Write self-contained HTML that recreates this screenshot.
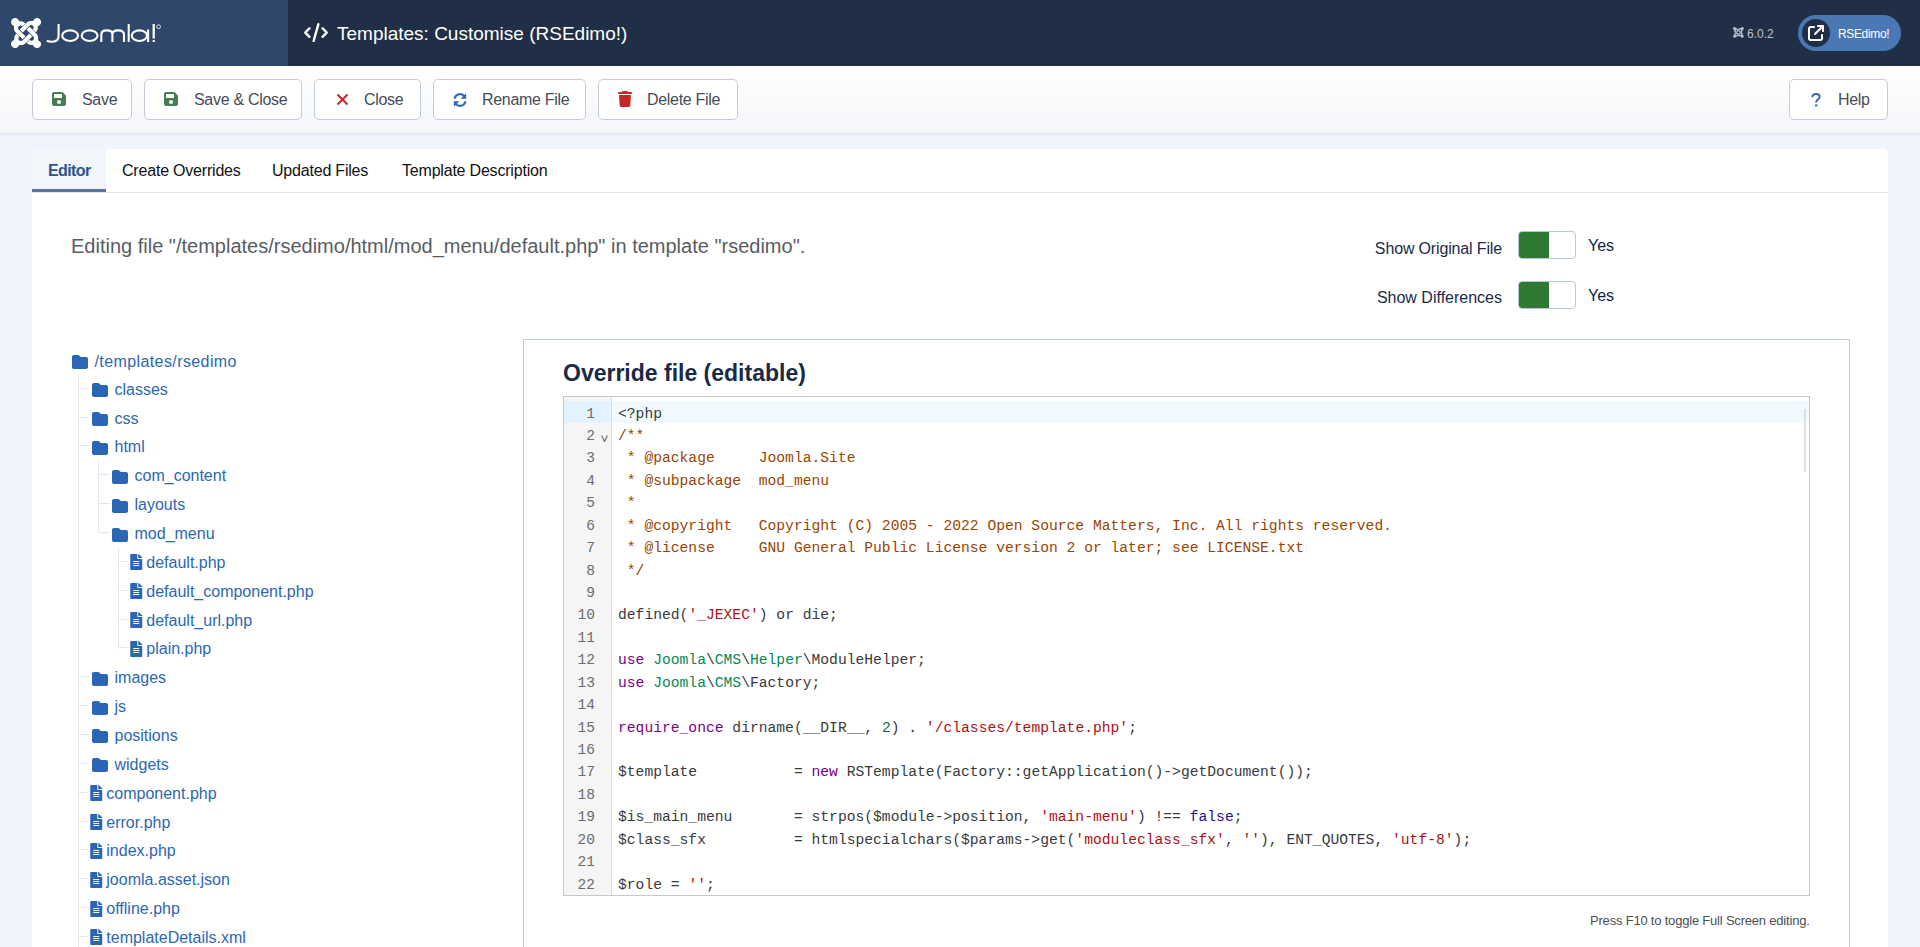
<!DOCTYPE html>
<html><head><meta charset="utf-8"><style>
*{box-sizing:border-box;margin:0;padding:0}
html,body{width:1920px;height:947px;overflow:hidden}
body{font-family:"Liberation Sans",sans-serif;background:#f0f4fb;position:relative;color:#22262a}
.abs{position:absolute}
svg{position:absolute;display:block}
#hdr{left:0;top:0;width:1920px;height:66px;background:#212f46}
#logo{left:0;top:0;width:288px;height:66px;background:#2e476b}
#title{left:337px;top:22px;font-size:19px;color:#fff;white-space:nowrap;line-height:24px}
#ver{left:1747px;top:25.5px;font-size:12px;color:#b9c2cf;line-height:16px;white-space:nowrap}
#pill{left:1798px;top:15px;width:103px;height:36px;border-radius:18px;background:#4a78b5}
#pillc{left:1802px;top:19px;width:28px;height:28px;border-radius:14px;background:#212f46}
#pillt{left:1838px;top:25.5px;font-size:12px;color:#fff;line-height:16px;white-space:nowrap;letter-spacing:-.35px}
#tb{left:0;top:66px;width:1920px;height:67px;background:linear-gradient(#fff,#f4f6f9);box-shadow:0 1px 3px rgba(30,50,90,.10)}
.btn{position:absolute;top:79px;height:41px;border:1px solid #c3ccd8;border-radius:5px;background:#fff;color:#474d55;font-size:16px;letter-spacing:-.3px;white-space:nowrap}
.btn span{position:absolute;top:11px;line-height:18px}
#card{left:32px;top:149px;width:1856px;height:820px;background:#fff;border-radius:5px 5px 0 0}
.tab{position:absolute;top:149px;height:43px;font-size:16px;line-height:18px;color:#111;white-space:nowrap;letter-spacing:-.2px}
.tab span{position:absolute;top:13px}
.tab.act{background:#f3f6fa;color:#2a5590;font-weight:bold;border-bottom:3px solid #5675a0;letter-spacing:-.6px}
#tabline{left:32px;top:192px;width:1856px;height:1px;background:#dde3ec}
#editing{left:71px;top:234px;font-size:20px;line-height:24px;color:#585d64;white-space:nowrap}
.swl{position:absolute;font-size:16px;line-height:18px;color:#1a2b4c;white-space:nowrap;text-align:right;letter-spacing:-.15px}
.sw{position:absolute;left:1518px;width:58px;height:28px;border:1px solid #b7c6da;border-radius:4px;background:#fff;overflow:hidden}
.sw i{position:absolute;left:0;top:0;width:30px;height:26px;background:#2e7a33}
.yes{position:absolute;left:1588px;font-size:16px;line-height:18px;color:#0d1f45}
.tr{position:absolute;font-size:16px;line-height:18px;color:#2c67b2;white-space:nowrap}
.vl{position:absolute;width:1px;background:#dfe6f0}
.hl{position:absolute;height:1px;background:#dfe6f0}
#panel{left:523px;top:339px;width:1327px;height:700px;border:1px solid #bccbe0;background:#fff}
#ph{left:563px;top:358px;font-size:23px;font-weight:bold;color:#1b2a44;line-height:30px;white-space:nowrap}
#cm{left:563px;top:396px;width:1247px;height:500px;border:1px solid #c8c8c8;background:#fff;overflow:hidden}
#gut{left:0;top:0;width:48px;height:498px;background:#f5f5f5;border-right:1px solid #ddd}
.ln{position:absolute;left:0;width:31px;text-align:right;font-family:"Liberation Mono",monospace;font-size:14.5px;color:#6c6c6c;line-height:22.4px}
.code{position:absolute;left:54px;font-family:"Liberation Mono",monospace;font-size:14.67px;color:#383a3c;line-height:22.4px;white-space:pre}
.c{color:#994400}.s{color:#aa1111}.k{color:#770088}.n{color:#008855}.nu{color:#116644}.a{color:#221199}
#actl{left:0;top:4px;width:1245px;height:22px;background:#f1faff}
#actg{left:0;top:4px;width:47px;height:22px;background:#e2f2ff}
#f10{left:1590px;top:913px;font-size:13px;letter-spacing:-.2px;color:#4a4f55;white-space:nowrap;line-height:16px}
</style></head><body>
<div id="hdr" class="abs"></div>
<div id="logo" class="abs"></div>
<svg style="left:10.8px;top:17.8px" width="30.1" height="30.1" viewBox="0 32 448 448"><g fill="#fff"><path d="M.6 92.1C.6 58.8 27.4 32 60.4 32c30 0 54.5 21.9 59.2 50.2 32.6-7.6 67.1.6 96.5 30l-44.3 44.3c-20.5-20.5-42.6-16.3-55.4-3.5-14.3 14.3-14.3 37.9 0 52.2l99.5 99.5-44 44.3c-87.7-87.2-49.7-49.7-99.8-99.7-26.8-26.5-35-64.8-24.8-98.9C20.4 144.6.6 120.7.6 92.1z"/><path transform="rotate(90 224 256)" d="M.6 92.1C.6 58.8 27.4 32 60.4 32c30 0 54.5 21.9 59.2 50.2 32.6-7.6 67.1.6 96.5 30l-44.3 44.3c-20.5-20.5-42.6-16.3-55.4-3.5-14.3 14.3-14.3 37.9 0 52.2l99.5 99.5-44 44.3c-87.7-87.2-49.7-49.7-99.8-99.7-26.8-26.5-35-64.8-24.8-98.9C20.4 144.6.6 120.7.6 92.1z"/><path transform="rotate(180 224 256)" d="M.6 92.1C.6 58.8 27.4 32 60.4 32c30 0 54.5 21.9 59.2 50.2 32.6-7.6 67.1.6 96.5 30l-44.3 44.3c-20.5-20.5-42.6-16.3-55.4-3.5-14.3 14.3-14.3 37.9 0 52.2l99.5 99.5-44 44.3c-87.7-87.2-49.7-49.7-99.8-99.7-26.8-26.5-35-64.8-24.8-98.9C20.4 144.6.6 120.7.6 92.1z"/><path transform="rotate(270 224 256)" d="M.6 92.1C.6 58.8 27.4 32 60.4 32c30 0 54.5 21.9 59.2 50.2 32.6-7.6 67.1.6 96.5 30l-44.3 44.3c-20.5-20.5-42.6-16.3-55.4-3.5-14.3 14.3-14.3 37.9 0 52.2l99.5 99.5-44 44.3c-87.7-87.2-49.7-49.7-99.8-99.7-26.8-26.5-35-64.8-24.8-98.9C20.4 144.6.6 120.7.6 92.1z"/></g></svg>
<svg style="left:40px;top:16px" width="125" height="32" viewBox="0 0 125 32"><g fill="none" stroke="#fff" stroke-width="2.1">
<path d="M18.6 8.1V19.5Q18.6 25.6 12.5 25.8Q9 25.9 6.8 24.6"/>
<ellipse cx="30.1" cy="19.7" rx="7.9" ry="5.3"/>
<ellipse cx="49.6" cy="19.7" rx="7.9" ry="5.3"/>
<path d="M61.3 26V18.5Q61.3 14.4 66.8 14.4Q72.4 14.4 72.4 18.5V26M72.4 18.5Q72.4 14.4 78 14.4Q84 14.4 84 18.5V26"/>
<path d="M88.7 8.1V26"/>
<ellipse cx="99.4" cy="19.7" rx="7.6" ry="5.3"/>
<path d="M108.1 13.5V26"/>
<path d="M113.7 8.1V22.5" stroke-width="2.3"/>
<circle cx="118.6" cy="10.7" r="1.9" stroke-width=".8"/>
</g><rect x="112.6" y="24" width="2.3" height="2" fill="#fff"/></svg>
<svg style="left:304px;top:23px" width="24" height="19.2" viewBox="0 0 640 512" fill="#fff"><path d="M392.8 1.2c-17-4.9-34.7 5-39.6 22l-128 448c-4.9 17 5 34.7 22 39.6s34.7-5 39.6-22l128-448c4.9-17-5-34.7-22-39.6zm80.6 120.1c-12.5 12.5-12.5 32.8 0 45.3L562.7 256l-89.4 89.4c-12.5 12.5-12.5 32.8 0 45.3s32.8 12.5 45.3 0l112-112c12.5-12.5 12.5-32.8 0-45.3l-112-112c-12.5-12.5-32.8-12.5-45.3 0zm-306.7 0c-12.5-12.5-32.8-12.5-45.3 0l-112 112c-12.5 12.5-12.5 32.8 0 45.3l112 112c12.5 12.5 32.8 12.5 45.3 0s12.5-32.8 0-45.3L77.3 256l89.4-89.4c12.5-12.5 12.5-32.8 0-45.3z"/></svg>
<div id="title" class="abs">Templates: Customise (RSEdimo!)</div>
<div id="ver" class="abs">6.0.2</div>
<svg style="left:1733.4px;top:27.3px" width="10.8" height="10.8" viewBox="0 32 448 448"><g fill="#b9c2cf"><path d="M.6 92.1C.6 58.8 27.4 32 60.4 32c30 0 54.5 21.9 59.2 50.2 32.6-7.6 67.1.6 96.5 30l-44.3 44.3c-20.5-20.5-42.6-16.3-55.4-3.5-14.3 14.3-14.3 37.9 0 52.2l99.5 99.5-44 44.3c-87.7-87.2-49.7-49.7-99.8-99.7-26.8-26.5-35-64.8-24.8-98.9C20.4 144.6.6 120.7.6 92.1z"/><path transform="rotate(90 224 256)" d="M.6 92.1C.6 58.8 27.4 32 60.4 32c30 0 54.5 21.9 59.2 50.2 32.6-7.6 67.1.6 96.5 30l-44.3 44.3c-20.5-20.5-42.6-16.3-55.4-3.5-14.3 14.3-14.3 37.9 0 52.2l99.5 99.5-44 44.3c-87.7-87.2-49.7-49.7-99.8-99.7-26.8-26.5-35-64.8-24.8-98.9C20.4 144.6.6 120.7.6 92.1z"/><path transform="rotate(180 224 256)" d="M.6 92.1C.6 58.8 27.4 32 60.4 32c30 0 54.5 21.9 59.2 50.2 32.6-7.6 67.1.6 96.5 30l-44.3 44.3c-20.5-20.5-42.6-16.3-55.4-3.5-14.3 14.3-14.3 37.9 0 52.2l99.5 99.5-44 44.3c-87.7-87.2-49.7-49.7-99.8-99.7-26.8-26.5-35-64.8-24.8-98.9C20.4 144.6.6 120.7.6 92.1z"/><path transform="rotate(270 224 256)" d="M.6 92.1C.6 58.8 27.4 32 60.4 32c30 0 54.5 21.9 59.2 50.2 32.6-7.6 67.1.6 96.5 30l-44.3 44.3c-20.5-20.5-42.6-16.3-55.4-3.5-14.3 14.3-14.3 37.9 0 52.2l99.5 99.5-44 44.3c-87.7-87.2-49.7-49.7-99.8-99.7-26.8-26.5-35-64.8-24.8-98.9C20.4 144.6.6 120.7.6 92.1z"/></g></svg>
<div id="pill" class="abs"></div><div id="pillc" class="abs"></div>
<svg style="left:1808px;top:25px" width="16" height="16" viewBox="0 0 512 512" fill="#fff"><path d="M320 0c-17.7 0-32 14.3-32 32s14.3 32 32 32h82.7L201.4 265.4c-12.5 12.5-12.5 32.8 0 45.3s32.8 12.5 45.3 0L448 109.3V192c0 17.7 14.3 32 32 32s32-14.3 32-32V32c0-17.7-14.3-32-32-32H320zM80 32C35.8 32 0 67.8 0 112V432c0 44.2 35.8 80 80 80H400c44.2 0 80-35.8 80-80V320c0-17.7-14.3-32-32-32s-32 14.3-32 32V432c0 8.8-7.2 16-16 16H80c-8.8 0-16-7.2-16-16V112c0-8.8 7.2-16 16-16H192c17.7 0 32-14.3 32-32s-14.3-32-32-32H80z"/></svg>
<div id="pillt" class="abs">RSEdimo!</div>
<div id="tb" class="abs"></div>
<div class="btn" style="left:32px;width:100px"><svg style="left:19px;top:11px" width="14" height="16" viewBox="0 0 448 512" fill="#457d54"><path d="M64 32C28.7 32 0 60.7 0 96V416c0 35.3 28.7 64 64 64H384c35.3 0 64-28.7 64-64V173.3c0-17-6.7-33.3-18.7-45.3L352 50.7C340 38.7 323.7 32 306.7 32H64zm0 96c0-17.7 14.3-32 32-32H288c17.7 0 32 14.3 32 32v64c0 17.7-14.3 32-32 32H96c-17.7 0-32-14.3-32-32V128zM224 288a64 64 0 1 1 0 128 64 64 0 1 1 0-128z"/></svg><span style="left:49px">Save</span></div>
<div class="btn" style="left:144px;width:158px"><svg style="left:19px;top:11px" width="14" height="16" viewBox="0 0 448 512" fill="#457d54"><path d="M64 32C28.7 32 0 60.7 0 96V416c0 35.3 28.7 64 64 64H384c35.3 0 64-28.7 64-64V173.3c0-17-6.7-33.3-18.7-45.3L352 50.7C340 38.7 323.7 32 306.7 32H64zm0 96c0-17.7 14.3-32 32-32H288c17.7 0 32 14.3 32 32v64c0 17.7-14.3 32-32 32H96c-17.7 0-32-14.3-32-32V128zM224 288a64 64 0 1 1 0 128 64 64 0 1 1 0-128z"/></svg><span style="left:49px">Save &amp; Close</span></div>
<div class="btn" style="left:314px;width:107px"><svg style="left:21px;top:13px" width="13" height="13" viewBox="0 0 13 13"><path d="M1.5 1.5L11.5 11.5M11.5 1.5L1.5 11.5" stroke="#c52827" stroke-width="2"/></svg><span style="left:49px">Close</span></div>
<div class="btn" style="left:433px;width:153px"><svg style="left:18px;top:12px" width="16" height="16" viewBox="0 0 16 16"><g fill="none" stroke="#2a69b8" stroke-width="2.2"><path d="M2.6 6.6A5.6 5.6 0 0 1 12.6 4.4"/><path d="M13.4 9.4A5.6 5.6 0 0 1 3.4 11.6"/></g><path d="M14.2 1.2V6.8H8.6Z" fill="#2a69b8"/><path d="M1.8 14.8V9.2H7.4Z" fill="#2a69b8"/></svg><span style="left:48px">Rename File</span></div>
<div class="btn" style="left:598px;width:140px"><svg style="left:19px;top:11px" width="14" height="16" viewBox="0 0 448 512" fill="#c52827"><path d="M135.2 17.7L128 32H32C14.3 32 0 46.3 0 64S14.3 96 32 96H416c17.7 0 32-14.3 32-32s-14.3-32-32-32H320l-7.2-14.3C307.4 6.8 296.3 0 284.2 0H163.8c-12.1 0-23.2 6.8-28.6 17.7zM416 128H32L53.2 467c1.6 25.3 22.6 45 47.9 45H346.9c25.3 0 46.3-19.7 47.9-45L416 128z"/></svg><span style="left:48px">Delete File</span></div>
<div class="btn" style="left:1789px;width:99px"><svg style="left:21px;top:13px" width="10" height="14" viewBox="0 0 10 14"><path d="M1.3 4.2C1.3 2.2 2.9 1 5 1S8.7 2.2 8.7 4C8.7 6.3 5.5 6.3 5.2 8.8V9.4" fill="none" stroke="#2a69b8" stroke-width="1.9"/><circle cx="5.2" cy="12.4" r="1.2" fill="#2a69b8"/></svg><span style="left:48px">Help</span></div>
<div id="card" class="abs"></div>
<div class="tab act abs" style="left:32px;width:74px;border-top-left-radius:5px"><span style="left:16px">Editor</span></div>
<div class="tab abs" style="left:106px;width:150px"><span style="left:16px">Create Overrides</span></div>
<div class="tab abs" style="left:256px;width:130px"><span style="left:16px">Updated Files</span></div>
<div class="tab abs" style="left:386px;width:182px"><span style="left:16px">Template Description</span></div>
<div id="tabline" class="abs"></div>
<div id="editing" class="abs">Editing file "/templates/rsedimo/html/mod_menu/default.php" in template "rsedimo".</div>
<div class="swl" style="left:1300px;width:202px;top:240px">Show Original File</div>
<div class="sw" style="top:231px"><i></i></div>
<div class="yes" style="top:237px">Yes</div>
<div class="swl" style="left:1300px;width:202px;top:289px;letter-spacing:0">Show Differences</div>
<div class="sw" style="top:281px"><i></i></div>
<div class="yes" style="top:287px">Yes</div>
<svg style="left:72px;top:354.3px" width="16" height="16" viewBox="0 0 512 512" fill="#2a66b5"><path d="M64 480H448c35.3 0 64-28.7 64-64V160c0-35.3-28.7-64-64-64H288c-10.1 0-19.6-4.7-25.6-12.8L243.2 57.6C231.1 41.5 212.1 32 192 32H64C28.7 32 0 60.7 0 96V416c0 35.3 28.7 64 64 64z"/></svg>
<div class="tr" style="left:94.5px;top:352.8px;letter-spacing:.4px">/templates/rsedimo</div>
<svg style="left:92px;top:382.2px" width="16" height="16" viewBox="0 0 512 512" fill="#2a66b5"><path d="M64 480H448c35.3 0 64-28.7 64-64V160c0-35.3-28.7-64-64-64H288c-10.1 0-19.6-4.7-25.6-12.8L243.2 57.6C231.1 41.5 212.1 32 192 32H64C28.7 32 0 60.7 0 96V416c0 35.3 28.7 64 64 64z"/></svg>
<div class="tr" style="left:114.5px;top:380.7px">classes</div>
<div class="hl" style="left:78.5px;top:387.7px;width:10.5px"></div>
<svg style="left:92px;top:411.1px" width="16" height="16" viewBox="0 0 512 512" fill="#2a66b5"><path d="M64 480H448c35.3 0 64-28.7 64-64V160c0-35.3-28.7-64-64-64H288c-10.1 0-19.6-4.7-25.6-12.8L243.2 57.6C231.1 41.5 212.1 32 192 32H64C28.7 32 0 60.7 0 96V416c0 35.3 28.7 64 64 64z"/></svg>
<div class="tr" style="left:114.5px;top:409.6px">css</div>
<div class="hl" style="left:78.5px;top:416.6px;width:10.5px"></div>
<svg style="left:92px;top:439.9px" width="16" height="16" viewBox="0 0 512 512" fill="#2a66b5"><path d="M64 480H448c35.3 0 64-28.7 64-64V160c0-35.3-28.7-64-64-64H288c-10.1 0-19.6-4.7-25.6-12.8L243.2 57.6C231.1 41.5 212.1 32 192 32H64C28.7 32 0 60.7 0 96V416c0 35.3 28.7 64 64 64z"/></svg>
<div class="tr" style="left:114.5px;top:438.4px">html</div>
<div class="hl" style="left:78.5px;top:445.4px;width:10.5px"></div>
<svg style="left:112px;top:468.8px" width="16" height="16" viewBox="0 0 512 512" fill="#2a66b5"><path d="M64 480H448c35.3 0 64-28.7 64-64V160c0-35.3-28.7-64-64-64H288c-10.1 0-19.6-4.7-25.6-12.8L243.2 57.6C231.1 41.5 212.1 32 192 32H64C28.7 32 0 60.7 0 96V416c0 35.3 28.7 64 64 64z"/></svg>
<div class="tr" style="left:134.5px;top:467.2px">com_content</div>
<div class="hl" style="left:98.5px;top:474.2px;width:10.5px"></div>
<svg style="left:112px;top:497.6px" width="16" height="16" viewBox="0 0 512 512" fill="#2a66b5"><path d="M64 480H448c35.3 0 64-28.7 64-64V160c0-35.3-28.7-64-64-64H288c-10.1 0-19.6-4.7-25.6-12.8L243.2 57.6C231.1 41.5 212.1 32 192 32H64C28.7 32 0 60.7 0 96V416c0 35.3 28.7 64 64 64z"/></svg>
<div class="tr" style="left:134.5px;top:496.1px">layouts</div>
<div class="hl" style="left:98.5px;top:503.1px;width:10.5px"></div>
<svg style="left:112px;top:526.5px" width="16" height="16" viewBox="0 0 512 512" fill="#2a66b5"><path d="M64 480H448c35.3 0 64-28.7 64-64V160c0-35.3-28.7-64-64-64H288c-10.1 0-19.6-4.7-25.6-12.8L243.2 57.6C231.1 41.5 212.1 32 192 32H64C28.7 32 0 60.7 0 96V416c0 35.3 28.7 64 64 64z"/></svg>
<div class="tr" style="left:134.5px;top:525.0px">mod_menu</div>
<div class="hl" style="left:98.5px;top:532.0px;width:10.5px"></div>
<svg style="left:130px;top:554.3px" width="12.5" height="16" viewBox="0 0 384 512" fill="#2a66b5"><path d="M224 136V0H24C10.7 0 0 10.7 0 24v464c0 13.3 10.7 24 24 24h336c13.3 0 24-10.7 24-24V160H248c-13.2 0-24-10.8-24-24zm64 236c0 6.6-5.4 12-12 12H108c-6.6 0-12-5.4-12-12v-8c0-6.6 5.4-12 12-12h168c6.6 0 12 5.4 12 12v8zm0-64c0 6.6-5.4 12-12 12H108c-6.6 0-12-5.4-12-12v-8c0-6.6 5.4-12 12-12h168c6.6 0 12 5.4 12 12v8zm0-72v8c0 6.6-5.4 12-12 12H108c-6.6 0-12-5.4-12-12v-8c0-6.6 5.4-12 12-12h168c6.6 0 12 5.4 12 12zm96-114.1v6.1H256V0h6.1c6.4 0 12.5 2.5 17 7l97.9 98c4.5 4.5 7 10.6 7 16.9z"/></svg>
<div class="tr" style="left:146.3px;top:553.8px">default.php</div>
<div class="hl" style="left:118.5px;top:560.8px;width:8.5px"></div>
<svg style="left:130px;top:583.1px" width="12.5" height="16" viewBox="0 0 384 512" fill="#2a66b5"><path d="M224 136V0H24C10.7 0 0 10.7 0 24v464c0 13.3 10.7 24 24 24h336c13.3 0 24-10.7 24-24V160H248c-13.2 0-24-10.8-24-24zm64 236c0 6.6-5.4 12-12 12H108c-6.6 0-12-5.4-12-12v-8c0-6.6 5.4-12 12-12h168c6.6 0 12 5.4 12 12v8zm0-64c0 6.6-5.4 12-12 12H108c-6.6 0-12-5.4-12-12v-8c0-6.6 5.4-12 12-12h168c6.6 0 12 5.4 12 12v8zm0-72v8c0 6.6-5.4 12-12 12H108c-6.6 0-12-5.4-12-12v-8c0-6.6 5.4-12 12-12h168c6.6 0 12 5.4 12 12zm96-114.1v6.1H256V0h6.1c6.4 0 12.5 2.5 17 7l97.9 98c4.5 4.5 7 10.6 7 16.9z"/></svg>
<div class="tr" style="left:146.3px;top:582.6px">default_component.php</div>
<div class="hl" style="left:118.5px;top:589.6px;width:8.5px"></div>
<svg style="left:130px;top:612.0px" width="12.5" height="16" viewBox="0 0 384 512" fill="#2a66b5"><path d="M224 136V0H24C10.7 0 0 10.7 0 24v464c0 13.3 10.7 24 24 24h336c13.3 0 24-10.7 24-24V160H248c-13.2 0-24-10.8-24-24zm64 236c0 6.6-5.4 12-12 12H108c-6.6 0-12-5.4-12-12v-8c0-6.6 5.4-12 12-12h168c6.6 0 12 5.4 12 12v8zm0-64c0 6.6-5.4 12-12 12H108c-6.6 0-12-5.4-12-12v-8c0-6.6 5.4-12 12-12h168c6.6 0 12 5.4 12 12v8zm0-72v8c0 6.6-5.4 12-12 12H108c-6.6 0-12-5.4-12-12v-8c0-6.6 5.4-12 12-12h168c6.6 0 12 5.4 12 12zm96-114.1v6.1H256V0h6.1c6.4 0 12.5 2.5 17 7l97.9 98c4.5 4.5 7 10.6 7 16.9z"/></svg>
<div class="tr" style="left:146.3px;top:611.5px">default_url.php</div>
<div class="hl" style="left:118.5px;top:618.5px;width:8.5px"></div>
<svg style="left:130px;top:640.9px" width="12.5" height="16" viewBox="0 0 384 512" fill="#2a66b5"><path d="M224 136V0H24C10.7 0 0 10.7 0 24v464c0 13.3 10.7 24 24 24h336c13.3 0 24-10.7 24-24V160H248c-13.2 0-24-10.8-24-24zm64 236c0 6.6-5.4 12-12 12H108c-6.6 0-12-5.4-12-12v-8c0-6.6 5.4-12 12-12h168c6.6 0 12 5.4 12 12v8zm0-64c0 6.6-5.4 12-12 12H108c-6.6 0-12-5.4-12-12v-8c0-6.6 5.4-12 12-12h168c6.6 0 12 5.4 12 12v8zm0-72v8c0 6.6-5.4 12-12 12H108c-6.6 0-12-5.4-12-12v-8c0-6.6 5.4-12 12-12h168c6.6 0 12 5.4 12 12zm96-114.1v6.1H256V0h6.1c6.4 0 12.5 2.5 17 7l97.9 98c4.5 4.5 7 10.6 7 16.9z"/></svg>
<div class="tr" style="left:146.3px;top:640.4px">plain.php</div>
<div class="hl" style="left:118.5px;top:647.4px;width:8.5px"></div>
<svg style="left:92px;top:670.7px" width="16" height="16" viewBox="0 0 512 512" fill="#2a66b5"><path d="M64 480H448c35.3 0 64-28.7 64-64V160c0-35.3-28.7-64-64-64H288c-10.1 0-19.6-4.7-25.6-12.8L243.2 57.6C231.1 41.5 212.1 32 192 32H64C28.7 32 0 60.7 0 96V416c0 35.3 28.7 64 64 64z"/></svg>
<div class="tr" style="left:114.5px;top:669.2px">images</div>
<div class="hl" style="left:78.5px;top:676.2px;width:10.5px"></div>
<svg style="left:92px;top:699.5px" width="16" height="16" viewBox="0 0 512 512" fill="#2a66b5"><path d="M64 480H448c35.3 0 64-28.7 64-64V160c0-35.3-28.7-64-64-64H288c-10.1 0-19.6-4.7-25.6-12.8L243.2 57.6C231.1 41.5 212.1 32 192 32H64C28.7 32 0 60.7 0 96V416c0 35.3 28.7 64 64 64z"/></svg>
<div class="tr" style="left:114.5px;top:698.0px">js</div>
<div class="hl" style="left:78.5px;top:705.0px;width:10.5px"></div>
<svg style="left:92px;top:728.4px" width="16" height="16" viewBox="0 0 512 512" fill="#2a66b5"><path d="M64 480H448c35.3 0 64-28.7 64-64V160c0-35.3-28.7-64-64-64H288c-10.1 0-19.6-4.7-25.6-12.8L243.2 57.6C231.1 41.5 212.1 32 192 32H64C28.7 32 0 60.7 0 96V416c0 35.3 28.7 64 64 64z"/></svg>
<div class="tr" style="left:114.5px;top:726.9px">positions</div>
<div class="hl" style="left:78.5px;top:733.9px;width:10.5px"></div>
<svg style="left:92px;top:757.2px" width="16" height="16" viewBox="0 0 512 512" fill="#2a66b5"><path d="M64 480H448c35.3 0 64-28.7 64-64V160c0-35.3-28.7-64-64-64H288c-10.1 0-19.6-4.7-25.6-12.8L243.2 57.6C231.1 41.5 212.1 32 192 32H64C28.7 32 0 60.7 0 96V416c0 35.3 28.7 64 64 64z"/></svg>
<div class="tr" style="left:114.5px;top:755.8px">widgets</div>
<div class="hl" style="left:78.5px;top:762.8px;width:10.5px"></div>
<svg style="left:90px;top:785.1px" width="12.5" height="16" viewBox="0 0 384 512" fill="#2a66b5"><path d="M224 136V0H24C10.7 0 0 10.7 0 24v464c0 13.3 10.7 24 24 24h336c13.3 0 24-10.7 24-24V160H248c-13.2 0-24-10.8-24-24zm64 236c0 6.6-5.4 12-12 12H108c-6.6 0-12-5.4-12-12v-8c0-6.6 5.4-12 12-12h168c6.6 0 12 5.4 12 12v8zm0-64c0 6.6-5.4 12-12 12H108c-6.6 0-12-5.4-12-12v-8c0-6.6 5.4-12 12-12h168c6.6 0 12 5.4 12 12v8zm0-72v8c0 6.6-5.4 12-12 12H108c-6.6 0-12-5.4-12-12v-8c0-6.6 5.4-12 12-12h168c6.6 0 12 5.4 12 12zm96-114.1v6.1H256V0h6.1c6.4 0 12.5 2.5 17 7l97.9 98c4.5 4.5 7 10.6 7 16.9z"/></svg>
<div class="tr" style="left:106.3px;top:784.6px">component.php</div>
<div class="hl" style="left:78.5px;top:791.6px;width:8.5px"></div>
<svg style="left:90px;top:814.0px" width="12.5" height="16" viewBox="0 0 384 512" fill="#2a66b5"><path d="M224 136V0H24C10.7 0 0 10.7 0 24v464c0 13.3 10.7 24 24 24h336c13.3 0 24-10.7 24-24V160H248c-13.2 0-24-10.8-24-24zm64 236c0 6.6-5.4 12-12 12H108c-6.6 0-12-5.4-12-12v-8c0-6.6 5.4-12 12-12h168c6.6 0 12 5.4 12 12v8zm0-64c0 6.6-5.4 12-12 12H108c-6.6 0-12-5.4-12-12v-8c0-6.6 5.4-12 12-12h168c6.6 0 12 5.4 12 12v8zm0-72v8c0 6.6-5.4 12-12 12H108c-6.6 0-12-5.4-12-12v-8c0-6.6 5.4-12 12-12h168c6.6 0 12 5.4 12 12zm96-114.1v6.1H256V0h6.1c6.4 0 12.5 2.5 17 7l97.9 98c4.5 4.5 7 10.6 7 16.9z"/></svg>
<div class="tr" style="left:106.3px;top:813.5px">error.php</div>
<div class="hl" style="left:78.5px;top:820.5px;width:8.5px"></div>
<svg style="left:90px;top:842.8px" width="12.5" height="16" viewBox="0 0 384 512" fill="#2a66b5"><path d="M224 136V0H24C10.7 0 0 10.7 0 24v464c0 13.3 10.7 24 24 24h336c13.3 0 24-10.7 24-24V160H248c-13.2 0-24-10.8-24-24zm64 236c0 6.6-5.4 12-12 12H108c-6.6 0-12-5.4-12-12v-8c0-6.6 5.4-12 12-12h168c6.6 0 12 5.4 12 12v8zm0-64c0 6.6-5.4 12-12 12H108c-6.6 0-12-5.4-12-12v-8c0-6.6 5.4-12 12-12h168c6.6 0 12 5.4 12 12v8zm0-72v8c0 6.6-5.4 12-12 12H108c-6.6 0-12-5.4-12-12v-8c0-6.6 5.4-12 12-12h168c6.6 0 12 5.4 12 12zm96-114.1v6.1H256V0h6.1c6.4 0 12.5 2.5 17 7l97.9 98c4.5 4.5 7 10.6 7 16.9z"/></svg>
<div class="tr" style="left:106.3px;top:842.3px">index.php</div>
<div class="hl" style="left:78.5px;top:849.3px;width:8.5px"></div>
<svg style="left:90px;top:871.7px" width="12.5" height="16" viewBox="0 0 384 512" fill="#2a66b5"><path d="M224 136V0H24C10.7 0 0 10.7 0 24v464c0 13.3 10.7 24 24 24h336c13.3 0 24-10.7 24-24V160H248c-13.2 0-24-10.8-24-24zm64 236c0 6.6-5.4 12-12 12H108c-6.6 0-12-5.4-12-12v-8c0-6.6 5.4-12 12-12h168c6.6 0 12 5.4 12 12v8zm0-64c0 6.6-5.4 12-12 12H108c-6.6 0-12-5.4-12-12v-8c0-6.6 5.4-12 12-12h168c6.6 0 12 5.4 12 12v8zm0-72v8c0 6.6-5.4 12-12 12H108c-6.6 0-12-5.4-12-12v-8c0-6.6 5.4-12 12-12h168c6.6 0 12 5.4 12 12zm96-114.1v6.1H256V0h6.1c6.4 0 12.5 2.5 17 7l97.9 98c4.5 4.5 7 10.6 7 16.9z"/></svg>
<div class="tr" style="left:106.3px;top:871.2px">joomla.asset.json</div>
<div class="hl" style="left:78.5px;top:878.2px;width:8.5px"></div>
<svg style="left:90px;top:900.5px" width="12.5" height="16" viewBox="0 0 384 512" fill="#2a66b5"><path d="M224 136V0H24C10.7 0 0 10.7 0 24v464c0 13.3 10.7 24 24 24h336c13.3 0 24-10.7 24-24V160H248c-13.2 0-24-10.8-24-24zm64 236c0 6.6-5.4 12-12 12H108c-6.6 0-12-5.4-12-12v-8c0-6.6 5.4-12 12-12h168c6.6 0 12 5.4 12 12v8zm0-64c0 6.6-5.4 12-12 12H108c-6.6 0-12-5.4-12-12v-8c0-6.6 5.4-12 12-12h168c6.6 0 12 5.4 12 12v8zm0-72v8c0 6.6-5.4 12-12 12H108c-6.6 0-12-5.4-12-12v-8c0-6.6 5.4-12 12-12h168c6.6 0 12 5.4 12 12zm96-114.1v6.1H256V0h6.1c6.4 0 12.5 2.5 17 7l97.9 98c4.5 4.5 7 10.6 7 16.9z"/></svg>
<div class="tr" style="left:106.3px;top:900.0px">offline.php</div>
<div class="hl" style="left:78.5px;top:907.0px;width:8.5px"></div>
<svg style="left:90px;top:929.3px" width="12.5" height="16" viewBox="0 0 384 512" fill="#2a66b5"><path d="M224 136V0H24C10.7 0 0 10.7 0 24v464c0 13.3 10.7 24 24 24h336c13.3 0 24-10.7 24-24V160H248c-13.2 0-24-10.8-24-24zm64 236c0 6.6-5.4 12-12 12H108c-6.6 0-12-5.4-12-12v-8c0-6.6 5.4-12 12-12h168c6.6 0 12 5.4 12 12v8zm0-64c0 6.6-5.4 12-12 12H108c-6.6 0-12-5.4-12-12v-8c0-6.6 5.4-12 12-12h168c6.6 0 12 5.4 12 12v8zm0-72v8c0 6.6-5.4 12-12 12H108c-6.6 0-12-5.4-12-12v-8c0-6.6 5.4-12 12-12h168c6.6 0 12 5.4 12 12zm96-114.1v6.1H256V0h6.1c6.4 0 12.5 2.5 17 7l97.9 98c4.5 4.5 7 10.6 7 16.9z"/></svg>
<div class="tr" style="left:106.3px;top:928.8px">templateDetails.xml</div>
<div class="hl" style="left:78.5px;top:935.8px;width:8.5px"></div>
<div class="vl" style="left:78px;top:375px;height:600px"></div>
<div class="vl" style="left:98px;top:462px;height:70px"></div>
<div class="vl" style="left:118px;top:548px;height:101px"></div>
<div id="panel" class="abs"></div>
<div id="ph" class="abs">Override file (editable)</div>
<div id="cm" class="abs"><div id="actl" class="abs"></div><div id="gut" class="abs"></div><div id="actg" class="abs"></div><div class="ln" style="top:5.60px">1</div><div class="ln" style="top:28.03px">2</div><div class="ln" style="top:50.46px">3</div><div class="ln" style="top:72.89px">4</div><div class="ln" style="top:95.32px">5</div><div class="ln" style="top:117.75px">6</div><div class="ln" style="top:140.18px">7</div><div class="ln" style="top:162.61px">8</div><div class="ln" style="top:185.04px">9</div><div class="ln" style="top:207.47px">10</div><div class="ln" style="top:229.90px">11</div><div class="ln" style="top:252.33px">12</div><div class="ln" style="top:274.76px">13</div><div class="ln" style="top:297.19px">14</div><div class="ln" style="top:319.62px">15</div><div class="ln" style="top:342.05px">16</div><div class="ln" style="top:364.48px">17</div><div class="ln" style="top:386.91px">18</div><div class="ln" style="top:409.34px">19</div><div class="ln" style="top:431.77px">20</div><div class="ln" style="top:454.20px">21</div><div class="ln" style="top:476.63px">22</div><svg style="left:37px;top:38px" width="7" height="7" viewBox="0 0 7 7"><path d="M.6 .5L3.5 6.5L6.4 .5" fill="none" stroke="#6c6c6c" stroke-width="1.2"/></svg><div class="code" style="top:5.60px">&lt;?php</div><div class="code" style="top:28.03px"><span class="c">/**</span></div><div class="code" style="top:50.46px"><span class="c"> * @package     Joomla.Site</span></div><div class="code" style="top:72.89px"><span class="c"> * @subpackage  mod_menu</span></div><div class="code" style="top:95.32px"><span class="c"> *</span></div><div class="code" style="top:117.75px"><span class="c"> * @copyright   Copyright (C) 2005 - 2022 Open Source Matters, Inc. All rights reserved.</span></div><div class="code" style="top:140.18px"><span class="c"> * @license     GNU General Public License version 2 or later; see LICENSE.txt</span></div><div class="code" style="top:162.61px"><span class="c"> */</span></div><div class="code" style="top:207.47px">defined(<span class="s">'_JEXEC'</span>) or die;</div><div class="code" style="top:252.33px"><span class="k">use</span> <span class="n">Joomla</span>\<span class="n">CMS</span>\<span class="n">Helper</span>\ModuleHelper;</div><div class="code" style="top:274.76px"><span class="k">use</span> <span class="n">Joomla</span>\<span class="n">CMS</span>\Factory;</div><div class="code" style="top:319.62px"><span class="k">require_once</span> dirname(__DIR__, <span class="nu">2</span>) . <span class="s">'/classes/template.php'</span>;</div><div class="code" style="top:364.48px">$template           = <span class="k">new</span> RSTemplate(Factory::getApplication()-&gt;getDocument());</div><div class="code" style="top:409.34px">$is_main_menu       = strpos($module-&gt;position, <span class="s">'main-menu'</span>) !== <span class="a">false</span>;</div><div class="code" style="top:431.77px">$class_sfx          = htmlspecialchars($params-&gt;get(<span class="s">'moduleclass_sfx'</span>, <span class="s">''</span>), ENT_QUOTES, <span class="s">'utf-8'</span>);</div><div class="code" style="top:476.63px">$role = <span class="s">''</span>;</div><div class="abs" style="left:1240px;top:12px;width:2px;height:63px;background:#e0e0e0"></div></div>
<div id="f10" class="abs">Press F10 to toggle Full Screen editing.</div>
</body></html>
